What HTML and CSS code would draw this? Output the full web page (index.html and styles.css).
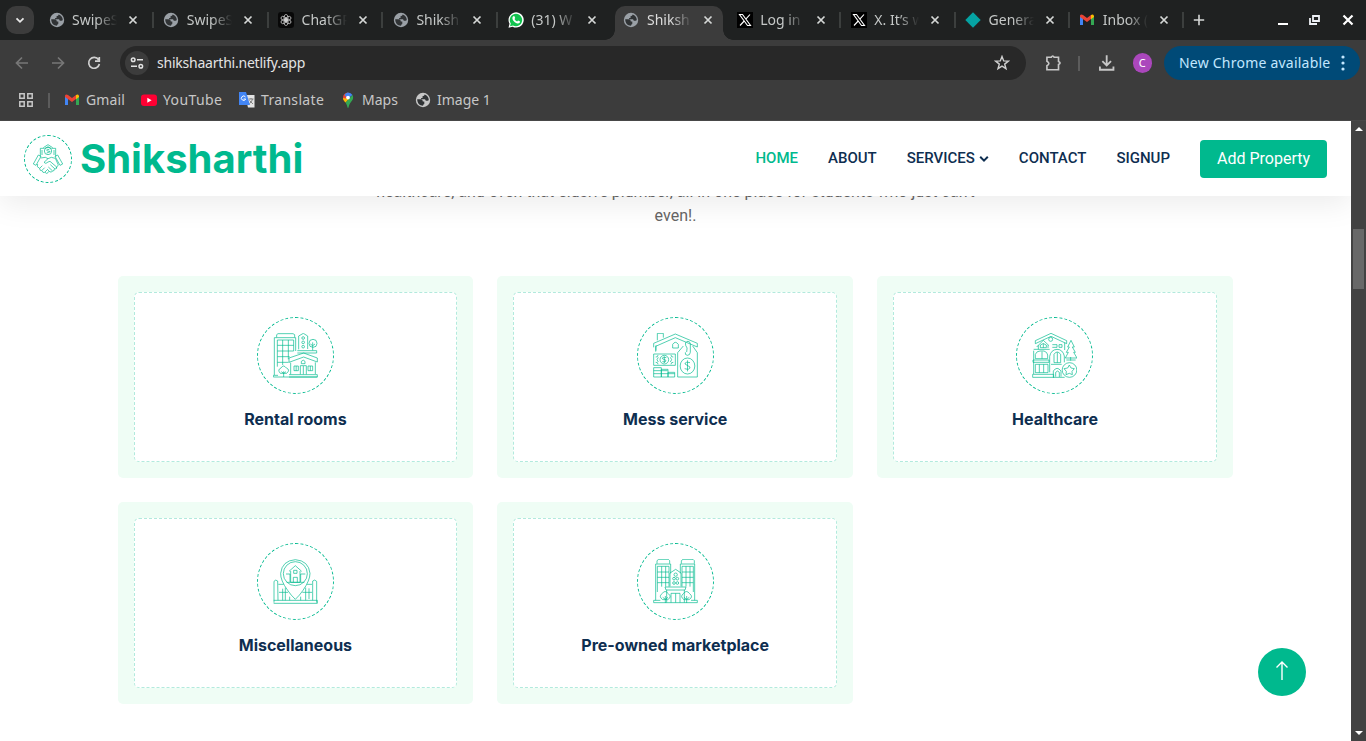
FILE: index.html
```html
<!DOCTYPE html>
<html lang="en">
<head>
<meta charset="utf-8">
<title>Shiksharthi</title>
<link rel="stylesheet" href="styles.css">
</head>
<body>
<svg class="defs" width="0" height="0" aria-hidden="true">
  <symbol id="globe" viewBox="0 0 16 16"><circle cx="8" cy="8" r="7.200" fill="currentColor"/><path d="M2.200 7.300h3.300c1.300 0 2.300.9 2.300 2.100h1.500v2.200c0 .6-.4 1.200-1.200 1.200v1C4.500 13.800 2.200 11 2.200 7.300zM9.600 2.400c-.2 1.200-.9 1.500-2 1.500v1.300c0 .6-.5.9-1.500.9v1.100h3.200c.9 0 1.400.6 1.400 1.500h1.700c.7 0 1.200-.3 1.400-.8C13.700 5 12 3 9.600 2.400z" fill="#303335"/></symbol>
  <symbol id="x" viewBox="0 0 10 10"><path d="M1.500 1.500l7 7M8.500 1.500l-7 7" stroke="currentColor" stroke-width="1.700"/></symbol>
  <symbol id="gmail" viewBox="0 0 16 12"><path d="M1 1.500v9.500h3V4z" fill="#4285f4"/><path d="M15 1.500v9.500h-3V4z" fill="#34a853"/><path d="M1 1.500Q2-.3 4 1l4 3 4-3v4L8 8 1 3z" fill="#ea4335"/><path d="M12 1q2-1.300 3 .8V3l-3 2.300z" fill="#fbbc04"/></symbol>
  <symbol id="xlogo" viewBox="0 0 16 16"><path d="M0 0h16v16H0z" fill="#000"/><path d="M2.500 2.500h3l8 11h-3zM13 2.500L8.800 7.200M7.200 9L3 13.500" fill="none" stroke="#fff" stroke-width="1.100"/></symbol>
</svg>
<div class="browser">
  <div class="tabs">
    <span class="search"><svg width="10" height="10" viewBox="0 0 10 10"><path d="M1.500 3.300L5 6.800l3.500-3.500" fill="none" stroke="#e8e8e8" stroke-width="1.800"/></svg></span>
    <div class="tab"><svg class="fav"><use href="#globe"/></svg><span class="label">SwipeS</span><svg class="close"><use href="#x"/></svg></div>
    <div class="tab sep"><svg class="fav"><use href="#globe"/></svg><span class="label">SwipeS</span><svg class="close"><use href="#x"/></svg></div>
    <div class="tab sep"><svg class="fav" viewBox="0 0 16 16"><rect width="16" height="16" rx="3" fill="#080808"/><g fill="none" stroke="#ddd" stroke-width=".7"><ellipse cx="8" cy="5.700" rx="2" ry="3.300"/><ellipse cx="8" cy="5.700" rx="2" ry="3.300" transform="rotate(60 8 8)"/><ellipse cx="8" cy="5.700" rx="2" ry="3.300" transform="rotate(120 8 8)"/><ellipse cx="8" cy="5.700" rx="2" ry="3.300" transform="rotate(180 8 8)"/><ellipse cx="8" cy="5.700" rx="2" ry="3.300" transform="rotate(240 8 8)"/><ellipse cx="8" cy="5.700" rx="2" ry="3.300" transform="rotate(300 8 8)"/></g></svg><span class="label">ChatGP</span><svg class="close"><use href="#x"/></svg></div>
    <div class="tab sep"><svg class="fav"><use href="#globe"/></svg><span class="label">Shiksh</span><svg class="close"><use href="#x"/></svg></div>
    <div class="tab sep"><svg class="fav" viewBox="0 0 16 16"><path d="M.5 15.700l1-4A7.600 7.600 0 1 1 4.600 14.700z" fill="#fff"/><path d="M2 14.200l.8-2.700A6.200 6.200 0 1 1 5 13.500z" fill="#12c34f"/><path d="M5.300 4.300l1-.2.900 2-.7 1c.6 1.200 1.400 1.900 2.600 2.400l1-1 2 1c0 1.500-1.300 2.100-2.500 1.900C7 11 4.500 8.300 4.400 6.200c0-.8.300-1.400.9-1.900z" fill="#fff"/></svg><span class="label">(31) W</span><svg class="close"><use href="#x"/></svg></div>
    <div class="tab active"><svg class="fav"><use href="#globe"/></svg><span class="label">Shiksh</span><svg class="close"><use href="#x"/></svg></div>
    <div class="tab"><svg class="fav"><use href="#xlogo"/></svg><span class="label">Log in</span><svg class="close"><use href="#x"/></svg></div>
    <div class="tab sep"><svg class="fav"><use href="#xlogo"/></svg><span class="label">X. It’s w</span><svg class="close"><use href="#x"/></svg></div>
    <div class="tab sep"><svg class="fav" viewBox="0 0 16 16"><path d="M8 .3L15.700 8 8 15.700.3 8z" fill="#05a2a2"/></svg><span class="label">Genera</span><svg class="close"><use href="#x"/></svg></div>
    <div class="tab sep"><svg class="fav"><use href="#gmail"/></svg><span class="label">Inbox (</span><svg class="close"><use href="#x"/></svg></div>
    <div class="newtab"><svg width="12" height="12" viewBox="0 0 12 12"><path d="M6 .8v10.400M.8 6h10.400" stroke="#d5d7d6" stroke-width="1.600"/></svg></div>
    <div class="winctl">
      <svg width="10" height="12" viewBox="0 0 10 12"><path d="M0 10h10" stroke="#fff" stroke-width="2"/></svg>
      <svg width="12" height="12" viewBox="0 0 12 12"><path d="M4 2h6v5H4zM1 4v6h7" fill="none" stroke="#eef1f6" stroke-width="1.800"/></svg>
      <svg width="12" height="12" viewBox="0 0 12 12"><path d="M1.500 1.500l9 9m0-9l-9 9" stroke="#fff" stroke-width="2.200"/></svg>
    </div>
  </div>
  <div class="toolbar">
    <svg class="nav-ic dim" viewBox="0 0 16 16"><path d="M14 8H3M8 2.500L2.500 8 8 13.500"/></svg>
    <svg class="nav-ic dim" viewBox="0 0 16 16"><path d="M2 8h11M8 2.500L13.500 8 8 13.500"/></svg>
    <svg class="nav-ic" viewBox="0 0 16 16"><path d="M12.600 4.800A5.400 5.400 0 1 0 13.400 9M13.300 2v4.200H9"/></svg>
    <div class="address">
      <span class="site"><svg width="14" height="14" viewBox="0 0 14 14" fill="none" stroke="#e3e3e3" stroke-width="1.500"><circle cx="3.200" cy="3.700" r="1.800"/><path d="M7 3.700h6M1 10.300h6"/><circle cx="10.800" cy="10.300" r="1.800"/></svg></span>
      <span class="url">shikshaarthi.netlify.app</span>
      <svg class="star" width="16" height="16" viewBox="0 0 16 16"><path d="M8 1.500l1.700 4.400 4.700.2-3.700 3 1.300 4.600L8 11.200l-4 2.500 1.300-4.600-3.700-3 4.700-.2z" fill="none" stroke="#d0d0d0" stroke-width="1.400"/></svg>
    </div>
    <svg class="ext" width="18" height="18" viewBox="0 0 18 18"><path d="M2 3h4.500Q8 .5 9.500 3H14v4.500q3.200 1.500 0 3V16H2v-4.200q4-2.300 0-4.600z" fill="none" stroke="#c7c7c7" stroke-width="1.700"/></svg>
    <i class="bar"></i>
    <svg class="dl" width="18" height="18" viewBox="0 0 18 18"><path d="M9 1v10.500M4.500 7L9 11.500 13.500 7M2 12.500V16h14v-3.500" fill="none" stroke="#c7c7c7" stroke-width="1.900"/></svg>
    <span class="avatar">C</span>
    <div class="update"><span>New Chrome available</span><svg width="4" height="16" viewBox="0 0 4 16" fill="#c2e7ff"><circle cx="2" cy="2" r="1.600"/><circle cx="2" cy="8" r="1.600"/><circle cx="2" cy="14" r="1.600"/></svg></div>
  </div>
  <div class="bookmarks">
    <svg class="apps" width="14" height="14" viewBox="0 0 14 14" fill="none" stroke="#c7c7c7" stroke-width="1.500"><path d="M.8.8h4.400v4.400H.8zM8.800.8h4.400v4.400H8.800zM.8 8.800h4.400v4.400H.8zM8.800 8.800h4.400v4.400H8.800z"/></svg>
    <i class="bar"></i>
    <div class="bm b1"><svg><use href="#gmail"/></svg><span>Gmail</span></div>
    <div class="bm b2"><svg viewBox="0 0 16 16"><rect y="2.500" width="16" height="11.500" rx="3" fill="#ff0033"/><path d="M6.300 5.700v5l4.300-2.500z" fill="#fff"/></svg><span>YouTube</span></div>
    <div class="bm b3"><svg viewBox="0 0 16 16"><path d="M6 3h9.500v12.500H9z" fill="#e3e3e3"/><path d="M0 0h7l4 13H0z" fill="#4285f4"/><path d="M6.500 5A2.200 2.200 0 1 0 6.700 7H4.600" fill="none" stroke="#fff" stroke-width="1"/><path d="M9.500 7h5M12 6v1M13.500 7q-.5 3-3 4.500M10.500 8.500l3.500 3.500" fill="none" stroke="#777" stroke-width=".9"/></svg><span>Translate</span></div>
    <div class="bm b4"><svg viewBox="0 0 16 16"><path d="M3 5.500A5.200 5.200 0 0 1 8 .5l1 5-5.200 3z" fill="#ea4335"/><path d="M8 .5A5.200 5.200 0 0 1 12.500 3L8 6.500 4.500 3Q5.700.5 8 .5z" fill="#4285f4"/><path d="M12.500 3c1.500 3 .2 5-1.500 7-1.300 1.600-2 3.500-2.500 5.500-.3.500-.7.500-1 0C7 13.500 6.500 12 5.500 10.500z" fill="#34a853"/><path d="M3 6l5.500 1-3 3.500C4 9 3 7.500 3 6z" fill="#fbbc04"/><circle cx="8" cy="5.600" r="1.900" fill="#fff"/></svg><span>Maps</span></div>
    <div class="bm b5"><svg><use href="#globe"/></svg><span>Image 1</span></div>
  </div>
</div>
<div class="viewport">
  <div class="page">
    <header class="navbar">
      <span class="brand-ic"><svg width="30" height="30" viewBox="0 0 90 90" class="line"><path d="M22 38V13h12M56 13h12v25M27 18v15M63 18v15M31 11L45 2l14 9M35 14l10-6 10 6"/><circle cx="45" cy="21" r="11"/><path d="M49 17q-8-3-8 1t8 4-8 5M16 33l8 4-15 27-8-4zM74 33l-8 4 15 27 8-4zM23 42l14-2 8 4 10-4 12 3 9 20-7 9M14 60l-1 8 7 5 8-8M20 73q0 8 6 7l9-9M27 80q2 8 8 5l7-7M36 85q5 6 9 1l4-5M45 44L33 55q5 7 12-1l6-2 20 17q2 6-5 6L52 62M64 75q1 6-5 6L46 69M58 81q-2 6-8 2l-8-8"/></svg></span>
      <h1>Shiksharthi</h1>
      <nav><a class="on">HOME</a><a>ABOUT</a><a class="drop">SERVICES<svg width="10" height="8" viewBox="0 0 10 8"><path d="M1.200 1.800L5 5.600l3.800-3.800" fill="none" stroke="#0e2e50" stroke-width="2"/></svg></a><a>CONTACT</a><a>SIGNUP</a></nav>
      <a class="btn">Add Property</a>
    </header>
    <p class="intro"><span>healthcare, and even that elusive plumber, all in one place for students who just can't</span><span>even!.</span></p>
    <section class="cards">
      <article><div class="inner"><span class="ring"><svg class="line" viewBox="69 69 135 135"><path d="M70 201h132M73 195V83h64v40M80 82v-8l4-3h45l5 3v8M70 201v-5h14M82 170V90h49v33M98 90v75M115 90v58M82 106h49M82 123h49M82 140h37M82 157h34M146 118V78l14-8 13 8v39M142 122h58v7h-58M117 157v-13l44-15 41 15v12l-41-15zM122 158v35M196 157v35M117 194h85v7h-85M132 168h13v14h-13zM138.500 168v14M174 168h14v14h-14zM181 168v14M151 193v-26h18v26M160 168v25M154 161v-7q6-7 11 0v7zM101 201v-17M94 185l7 5 7-5M91 190q-10-11 2-16 7-12 16 0 13 5 1 16zM188 121v-24M181 102l7 5 7-5"/><circle cx="189" cy="100" r="12"/><circle cx="159.500" cy="84" r="4"/><circle cx="159.500" cy="97" r="4"/><circle cx="159.500" cy="110" r="4"/></svg></span><h2>Rental rooms</h2></div></article>
      <article><div class="inner"><span class="ring"><svg class="line" viewBox="69 69 135 135"><path d="M78 122v-16M71 112v-12l65-28 66 28v11l-66-28-59 26v16M82 91V70h18v13M128 114v-11q8-12 17 0v11zM71 132h65v34H71zM71 173h23v28H71zM94 178h20v23H94zM114 187h20v14h-20zM71 182h42M71 191h63M143 201v-73l17-20M188 108l14 20v73h-59M170 126q4-14-3-20-3-9 4-12 9-1 10 7v26q-1 9-9 9-8-1-6-9"/><circle cx="103" cy="149" r="13"/><path d="M109 143q-13-3-12 3l11 5q0 8-11 4M103 139v20M77 141q7 1 7-6M77 157q7-1 7 6M130 141q-7 1-7-6M130 157q-7-1-7 6M85 142l-4 7 4 7M121 142l4 7-4 7"/><ellipse cx="172.500" cy="168" rx="22" ry="24"/><path d="M180 158q-15-4-15 4l15 9q0 10-16 5M172.500 151v33"/></svg></span><h2>Mess service</h2></div></article>
      <article><div class="inner"><span class="ring"><svg class="line" viewBox="69 69 135 135"><path d="M79 101V92l47-22 47 22v9l-47-22zM83 111l20-20 17 16M88 106v12M117 106v8M74 118h48M74 122v70M94 113v-8q9-9 18 0v8zM103 101v12M150 104h9v8h-9zM130 104h14v8h-14M167 98v22M79 146v-13q4-10 14-10h12q10 3 11 12v11zM99 125v21M72 150h48v7H72zM79 163h38v25H79zM91 163v25M104 163v25M71 193h63v9H71zM122 187v-48q4-20 22-21 17 0 22 20v19M135 158v-25q9-14 20 0v25zM145 127v31M126 163h32M133 202v-19q11-16 23 0v17M140 200v-13q6-8 11 0v14M132 202h35M185 152v-11M186 91l-10 20h5l-9 16h6l-9 17h35l-10-17h5l-9-16h6zM172 150h28"/><circle cx="125" cy="88" r="6"/><circle cx="181.500" cy="180" r="22"/><path d="M181 165l5 9 10 2-7 8 1 10-9-4-10 4 1-10-7-8 11-2z"/></svg></span><h2>Healthcare</h2></div></article>
      <article><div class="inner"><span class="ring"><svg class="line" viewBox="69 69 135 135"><path d="M136 190q-13-12-23-27-22-30-21-51 4-38 44-41 40 3 44 41 0 21-21 51-10 15-23 27z"/><circle cx="136" cy="113" r="36"/><path d="M117 106l19-17 19 17M122 105v34h28v-34M110 139h53M108 114h12v24M166 114h-14v24M130 139v-15h12v15M131 112h10v-9h-10zM72 200v-64q5-7 11-1l1 58M200 200v-64q-6-7-12-1v58M71 202h131v-9H71M85 145h16M171 145h15M98 158v35M87 169h27M106 155v38M167 155v38M157 169h29M177 157v32M119 182v11M152 182v11"/></svg></span><h2>Miscellaneous</h2></div></article>
      <article><div class="inner"><span class="ring"><svg class="line" viewBox="69 69 135 135"><path d="M77 193V84h45v28M81 83v-9l5-4h29l4 4v9M194 193V84h-43v28M154 83v-9l5-4h30l4 4v9M82 168V91h35v61M95 91v61M107 91v61M82 108h35M82 124h35M82 140h35M190 168V91h-34v61M168 91v61M180 91v61M156 108h34M156 124h34M156 140h34M120 151v-40l17-11 16 11v40M105 153h63l-3 9h-57zM110 162v38M163 162v38M123 200v-28h27v28M137 172v28M71 200h131v-7h-19M71 200v-7h20M106 201v-21M98 184l8 6 8-6M98 191q-13-9-2-18 9-13 19 0 12 10-2 18zM170 201v-21M162 184l8 6 8-6M162 191q-13-9-2-18 9-13 19 0 12 10-2 18z"/><circle cx="137" cy="116" r="5"/><circle cx="132" cy="128" r="4"/><circle cx="142" cy="128" r="4"/><circle cx="132" cy="141" r="4"/><circle cx="142" cy="141" r="4"/></svg></span><h2>Pre-owned marketplace</h2></div></article>
    </section>
    <a class="totop"><svg width="14" height="22" viewBox="0 0 14 22"><path d="M7 19V1M1.500 6.500L7 1l5.500 5.500" fill="none" stroke="#fff" stroke-width="1.400"/></svg></a>
  </div>
  <div class="scrollbar"><svg width="8" height="4" viewBox="0 0 8 4"><path d="M0 4l4-4 4 4z" fill="#fff"/></svg><i></i><svg width="8" height="4" viewBox="0 0 8 4"><path d="M0 0l4 4 4-4z" fill="#fff"/></svg></div>
</div>
</body>
</html>
```
FILE: styles.css
```css
*{box-sizing:border-box}
body{margin:0;width:1366px;height:741px;overflow:hidden;display:flex;flex-direction:column;font-family:Roboto,sans-serif;background:#fff}
.defs{position:absolute}
.browser{flex:none;height:121px;background:#3c3c3c;border-bottom:1px solid #474747;font-family:"Noto Sans",sans-serif;font-size:14px;color:#c7c7c7}
.tabs{height:40px;background:#1f2121;display:flex;padding-left:6px}
.search{width:28px;height:28px;margin:6px 7px 0 0;border-radius:10px;background:#3c3c3c;display:flex;align-items:center;justify-content:center}
.tab{position:relative;width:114.800px;flex:none;height:40px;padding-left:7.500px;display:flex;align-items:center;color:#c5c8c7}
.active,.active~.tab{width:114.200px}
.fav{width:16px;height:16px;flex:none;color:#9aa0a6}
.label{width:46px;margin-left:7.500px;padding-bottom:2px;white-space:nowrap;overflow:hidden;-webkit-mask-image:linear-gradient(90deg,#000 52%,transparent 98%);mask-image:linear-gradient(90deg,#000 52%,transparent 98%)}
.close{width:10px;height:10px;margin-left:10px;color:#d5d7d6}
.sep::before{content:"";position:absolute;left:-4px;top:12px;width:2px;height:16px;background:#3c3f3e}
.active{z-index:1;padding-left:8.500px;color:#dcdcdc}
.active::before{content:"";position:absolute;z-index:-1;left:0;top:6px;width:108px;height:34px;background:#3c3c3c;border-radius:10px 10px 0 0}
.active::after{content:"";position:absolute;z-index:-1;left:-10px;top:30px;width:128px;height:10px;background:radial-gradient(circle at 0 0,transparent 9.500px,#3c3c3c 10px) 0 0/10px 10px no-repeat,radial-gradient(circle at 100% 0,transparent 9.500px,#3c3c3c 10px) 100% 0/10px 10px no-repeat}
.newtab{position:relative;width:70px;display:flex;align-items:center;padding-left:7px}
.newtab::before{content:"";position:absolute;left:-4px;top:12px;width:2px;height:16px;background:#3c3f3e}
.winctl{margin-left:auto;display:flex;gap:21px;padding:14px 12px 0 0}
.toolbar{height:40px;display:flex;align-items:center;padding:6px 6px 0 14px}
.nav-ic{width:16px;height:16px;flex:none;margin-right:20px;fill:none;stroke:#d0d0d0;stroke-width:1.700}
.nav-ic.dim{stroke:#777}
.address{width:906px;height:34px;margin-left:-2px;flex:none;border-radius:17px;background:#282828;display:flex;align-items:center;padding:0 16px 0 5px}
.site{width:24px;height:24px;border-radius:12px;background:#3c3c3c;display:flex;align-items:center;justify-content:center}
.url{margin-left:8px;padding-bottom:2px;letter-spacing:-.22px;color:#e3e3e3}
.star{margin-left:auto}
.ext{margin-left:19px}
.bar{width:2px;height:15px;background:#5c5c5c}
.toolbar .bar{margin:0 18px 0 16px}
.avatar{width:20px;height:20px;margin:0 12px 0 17px;border-radius:10px;background:#ab47bc;color:#fff;font-size:11px;line-height:19px;text-align:center}
.update{width:196px;height:34px;flex:none;border-radius:17px;background:#004a77;color:#c2e7ff;display:flex;align-items:center;justify-content:space-between;padding:0 15px;white-space:nowrap}
.update span{padding-bottom:2px;letter-spacing:.22px}
.bookmarks{height:40px;display:flex;align-items:center;padding-left:19px}
.bookmarks .bar{margin:0 14px 0 15px}
.bm{display:flex;align-items:center;gap:6px;white-space:nowrap;flex:none}
.bm span{padding-bottom:2px}
.bm svg{width:16px;height:16px;flex:none;color:#c7c7c7}
.b1{width:77px;letter-spacing:.15px}
.b2{width:98px;letter-spacing:.4px}
.b3{width:101px;letter-spacing:.32px}
.b4{width:75px}
.viewport{flex:none;height:620px;display:flex}
.page{position:relative;width:1351px;height:620px;overflow:hidden}
.scrollbar{width:15px;background:#424242;display:flex;flex-direction:column;align-items:center;padding:6px 0}
.scrollbar i{width:11px;height:60px;margin:98px 0 auto;background:#686868}
.navbar{position:relative;z-index:1;height:75px;background:#fff;box-shadow:0 8px 30px rgba(0,0,0,.08);display:flex;align-items:center;padding:0 24px}
.brand-ic{width:48px;height:48px;border:1px dashed #00b98e;border-radius:50%;display:flex;align-items:center;justify-content:center}
.line{fill:none;stroke:#00b98e;stroke-opacity:.68;stroke-width:3;stroke-linejoin:round}
.navbar h1{margin:0 0 0 8px;font:700 40px/48px Inter,sans-serif;color:#00b98e}
nav{margin-left:auto;padding-bottom:2px;display:flex;gap:30px;font-size:15px;font-weight:500;color:#0e2e50}
nav .on{color:#00b98e}
.drop svg{margin-left:4px}
.btn{width:127px;height:38px;margin-left:30px;border-radius:4px;background:#00b98e;color:#fff;font-size:16px;line-height:38px;text-align:center}
.intro{margin:-16px 0 0;height:48px;line-height:24px;font-size:16px;letter-spacing:.015px;color:#666565;display:flex;flex-direction:column;align-items:center}
.cards{margin:48px 118px 0 117.500px;display:grid;grid-template-columns:repeat(3,355.800px);gap:24px}
.cards article{height:202px;padding:16px;border-radius:5px;background:#effdf5}
.inner{height:170px;padding-top:24px;border:1px dashed rgba(0,185,142,.3);border-radius:5px;background:#fff;display:flex;flex-direction:column;align-items:center}
.ring{width:77px;height:77px;padding:15px;border:1px dashed #00b98e;border-radius:50%}
.ring svg{display:block;width:45px;height:45px}
.inner h2{margin:16px 0 0;font:700 16px/19px Inter,sans-serif;color:#0e2e50}
.totop{position:absolute;right:45px;bottom:45px;width:48px;height:48px;border-radius:50%;background:#00b98e;display:flex;align-items:center;justify-content:center}
```
